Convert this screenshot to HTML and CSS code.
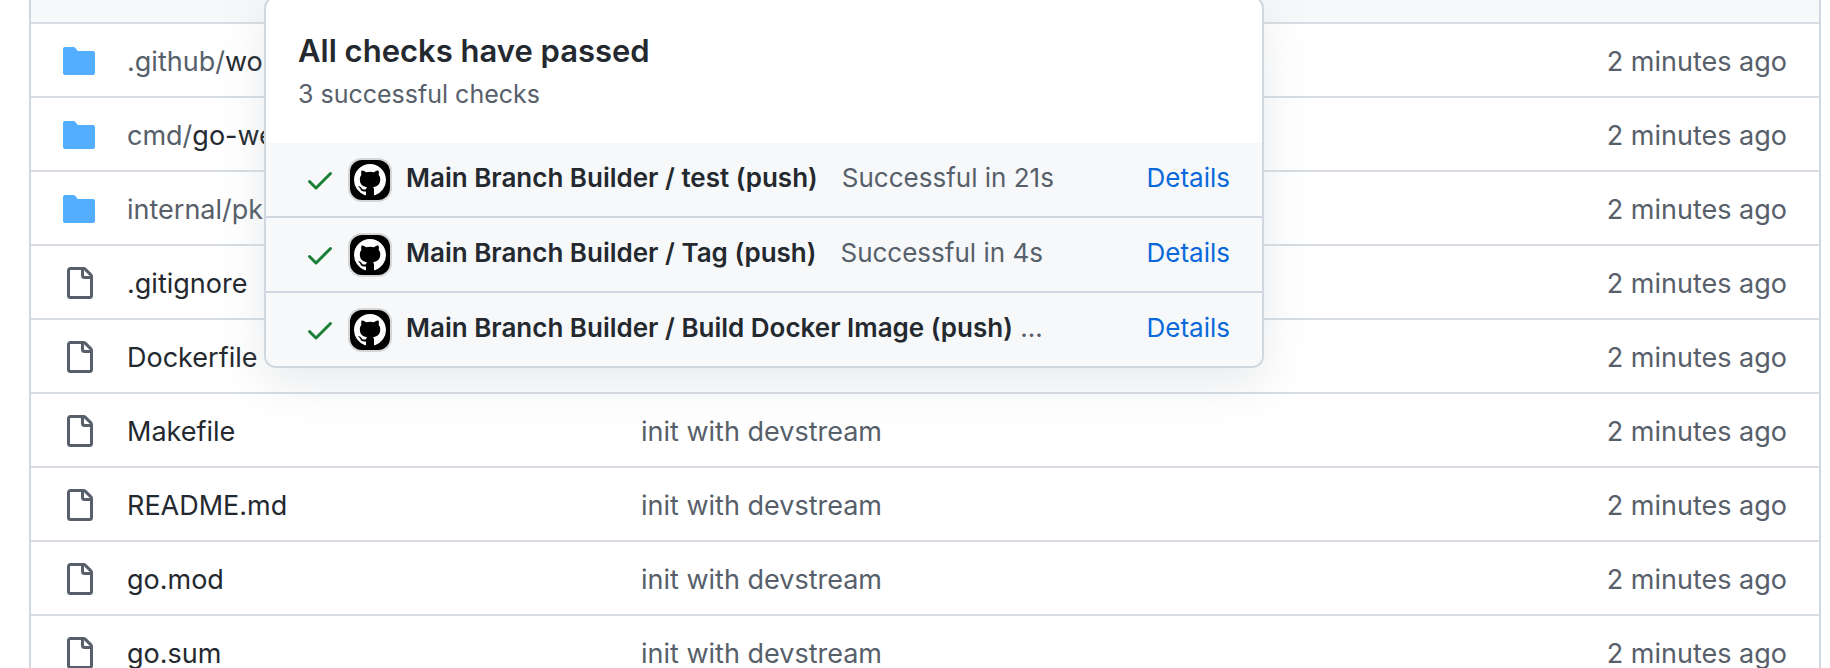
FILE: index.html
```
<!DOCTYPE html>
<html lang="en">
<head>
<meta charset="utf-8">
<title>Repository files</title>
<link rel="stylesheet" href="styles.css">
</head>
<body>
<svg class="sprite" aria-hidden="true">
  <symbol id="folder" viewBox="0 0 16 16"><path d="M1 1a1 1 0 0 0-1 1v12a1 1 0 0 0 1 1h14a1 1 0 0 0 1-1V4a1 1 0 0 0-1-1H7.5a.25.25 0 0 1-.2-.1l-.9-1.2C6.07 1.26 5.55 1 5 1z"/></symbol>
  <symbol id="file" viewBox="0 0 16 16"><path d="M2 1.75C2 .784 2.784 0 3.75 0h6.586c.464 0 .909.184 1.237.513l2.914 2.914c.329.328.513.773.513 1.237v9.586A1.75 1.75 0 0 1 13.25 16h-9.5A1.75 1.75 0 0 1 2 14.25Zm1.75-.25a.25.25 0 0 0-.25.25v12.5c0 .138.112.25.25.25h9.5a.25.25 0 0 0 .25-.25V6h-2.75A1.75 1.75 0 0 1 9 4.25V1.5Zm6.75.062V4.25c0 .138.112.25.25.25h2.688l-.011-.013-2.914-2.914-.013-.011Z"/></symbol>
  <symbol id="check" viewBox="0 0 16 16"><path d="M13.78 4.22a.75.75 0 0 1 0 1.06l-7.25 7.25a.75.75 0 0 1-1.06 0L2.22 9.28a.751.751 0 0 1 .018-1.042.751.751 0 0 1 1.042-.018L6 10.94l6.72-6.72a.75.75 0 0 1 1.06 0Z"/></symbol>
  <symbol id="mark" viewBox="0 0 16 16"><path d="M8 0c4.42 0 8 3.58 8 8a8.013 8.013 0 0 1-5.45 7.59c-.4.08-.55-.17-.55-.38 0-.27.01-1.13.01-2.2 0-.75-.25-1.23-.54-1.48 1.78-.2 3.65-.88 3.65-3.95 0-.88-.31-1.59-.82-2.15.08-.2.36-1.02-.08-2.12 0 0-.67-.22-2.2.82-.64-.18-1.32-.27-2-.27-.68 0-1.36.09-2 .27-1.53-1.03-2.2-.82-2.2-.82-.44 1.1-.16 1.92-.08 2.12-.51.56-.82 1.28-.82 2.15 0 3.06 1.86 3.75 3.64 3.95-.23.2-.44.55-.51 1.07-.46.21-1.61.55-2.33-.66-.15-.24-.6-.83-1.23-.82-.67.01-.27.38.01.53.34.19.73.9.82 1.13.16.45.68 1.31 2.69.94 0 .67.01 1.3.01 1.49 0 .21-.15.45-.55.38A7.995 7.995 0 0 1 0 8c0-4.42 3.58-8 8-8Z"/></symbol>
</svg>

<main class="files">
  <div class="files-head"></div>
  <table class="files-table">
    <tbody>
      <tr><td class="col-icon"><svg class="icon folder"><use href="#folder"/></svg></td><td class="col-name"><a href="#"><span class="muted">.github/</span>wo</a></td><td class="col-message"></td><td class="col-age">2 minutes ago</td></tr>
      <tr><td class="col-icon"><svg class="icon folder"><use href="#folder"/></svg></td><td class="col-name"><a href="#"><span class="muted">cmd/</span>go-we</a></td><td class="col-message"></td><td class="col-age">2 minutes ago</td></tr>
      <tr><td class="col-icon"><svg class="icon folder"><use href="#folder"/></svg></td><td class="col-name"><a href="#"><span class="muted">internal/pk</span></a></td><td class="col-message"></td><td class="col-age">2 minutes ago</td></tr>
      <tr><td class="col-icon"><svg class="icon"><use href="#file"/></svg></td><td class="col-name"><a href="#">.gitignore</a></td><td class="col-message"></td><td class="col-age">2 minutes ago</td></tr>
      <tr><td class="col-icon"><svg class="icon"><use href="#file"/></svg></td><td class="col-name"><a href="#">Dockerfile</a></td><td class="col-message"></td><td class="col-age">2 minutes ago</td></tr>
      <tr><td class="col-icon"><svg class="icon"><use href="#file"/></svg></td><td class="col-name"><a href="#">Makefile</a></td><td class="col-message"><a href="#">init with devstream</a></td><td class="col-age">2 minutes ago</td></tr>
      <tr><td class="col-icon"><svg class="icon"><use href="#file"/></svg></td><td class="col-name"><a href="#">README.md</a></td><td class="col-message"><a href="#">init with devstream</a></td><td class="col-age">2 minutes ago</td></tr>
      <tr><td class="col-icon"><svg class="icon"><use href="#file"/></svg></td><td class="col-name"><a href="#">go.mod</a></td><td class="col-message"><a href="#">init with devstream</a></td><td class="col-age">2 minutes ago</td></tr>
      <tr><td class="col-icon"><svg class="icon"><use href="#file"/></svg></td><td class="col-name"><a href="#">go.sum</a></td><td class="col-message"><a href="#">init with devstream</a></td><td class="col-age">2 minutes ago</td></tr>
    </tbody>
  </table>
</main>

<section class="popover">
  <header class="popover-head">
    <h2>All checks have passed</h2>
    <p>3 successful checks</p>
  </header>
  <ul class="checks">
    <li class="check">
      <svg class="icon passed"><use href="#check"/></svg>
      <span class="avatar"><svg class="icon"><use href="#mark"/></svg></span>
      <p class="check-text"><strong>Main Branch Builder / test (push)</strong><span class="result">Successful in 21s</span></p>
      <a class="details" href="#">Details</a>
    </li>
    <li class="check">
      <svg class="icon passed"><use href="#check"/></svg>
      <span class="avatar"><svg class="icon"><use href="#mark"/></svg></span>
      <p class="check-text"><strong>Main Branch Builder / Tag (push)</strong><span class="result">Successful in 4s</span></p>
      <a class="details" href="#">Details</a>
    </li>
    <li class="check">
      <svg class="icon passed"><use href="#check"/></svg>
      <span class="avatar"><svg class="icon"><use href="#mark"/></svg></span>
      <p class="check-text"><strong>Main Branch Builder / Build Docker Image (push)</strong> …</p>
      <a class="details" href="#">Details</a>
    </li>
  </ul>
</section>
</body>
</html>
```
FILE: styles.css
```
* { box-sizing: border-box; }

body {
  position: relative;
  margin: 0;
  height: 100vh;
  overflow: hidden;
  background: #fff;
  color: #24292f;
  font: 27px/40px Inter, "Liberation Sans", sans-serif;
}

a { color: inherit; text-decoration: none; }

.sprite { display: none; }

.icon {
  display: block;
  width: 32px;
  height: 32px;
  fill: #57606a;
}

.icon.folder { fill: #54aeff; }
.icon.passed { fill: #1a7f37; }

.muted { color: #57606a; }

.files {
  margin: 0 9px 0 29px;
  border: solid #d0d7de;
  border-width: 0 2px;
}

.files-head {
  height: 22px;
  background: #f6f8fa;
}

.files-table {
  width: 100%;
  table-layout: fixed;
  border-collapse: separate;
  border-spacing: 0;
}

.files-table td {
  height: 74px;
  padding: 3px 0 0;
  border-top: 2px solid #d8dee4;
  white-space: nowrap;
}

.files-table .col-icon { width: 96px; padding: 1px 0 0 32px; }
.files-table .col-name { width: 514px; }
.files-table .col-message { color: #57606a; }
.files-table .col-age {
  width: 300px;
  padding-right: 32px;
  color: #57606a;
  text-align: right;
}

.popover {
  position: absolute;
  top: -4px;
  left: 264px;
  width: 1000px;
  overflow: hidden;
  border: 2px solid #d0d7de;
  border-radius: 12px;
  background: #fff;
  box-shadow: 0 16px 48px rgba(140, 149, 159, 0.2);
}

.popover-head { padding: 31px 32px 29px; }

.popover-head h2 {
  margin: 0 0 1px;
  font-size: 31px;
  font-weight: 600;
  line-height: 44px;
}

.popover-head p {
  margin: 0;
  color: #57606a;
  font-size: 25px;
}

.checks {
  margin: 0;
  padding: 0;
  list-style: none;
}

.check {
  box-sizing: content-box;
  display: flex;
  align-items: center;
  height: 73px;
  padding: 0 32px 0 38px;
  background: #f6f8fa;
  font-size: 26px;
}

.check + .check { border-top: 2px solid #d0d7de; }

.avatar {
  display: grid;
  place-items: center;
  width: 40px;
  height: 40px;
  margin: 0 16px 0 14px;
  border-radius: 12px;
  background: #000;
  box-shadow: 0 0 0 2px #d4d6d8;
}

.avatar .icon { fill: #fff; }

.check-text {
  flex: 1;
  margin: 0;
  padding-bottom: 4px;
  color: #57606a;
  white-space: nowrap;
}

.check-text strong { color: #24292f; font-weight: 600; }

.result { margin-left: 24px; }

.details { padding-bottom: 4px; color: #0969da; }
```
